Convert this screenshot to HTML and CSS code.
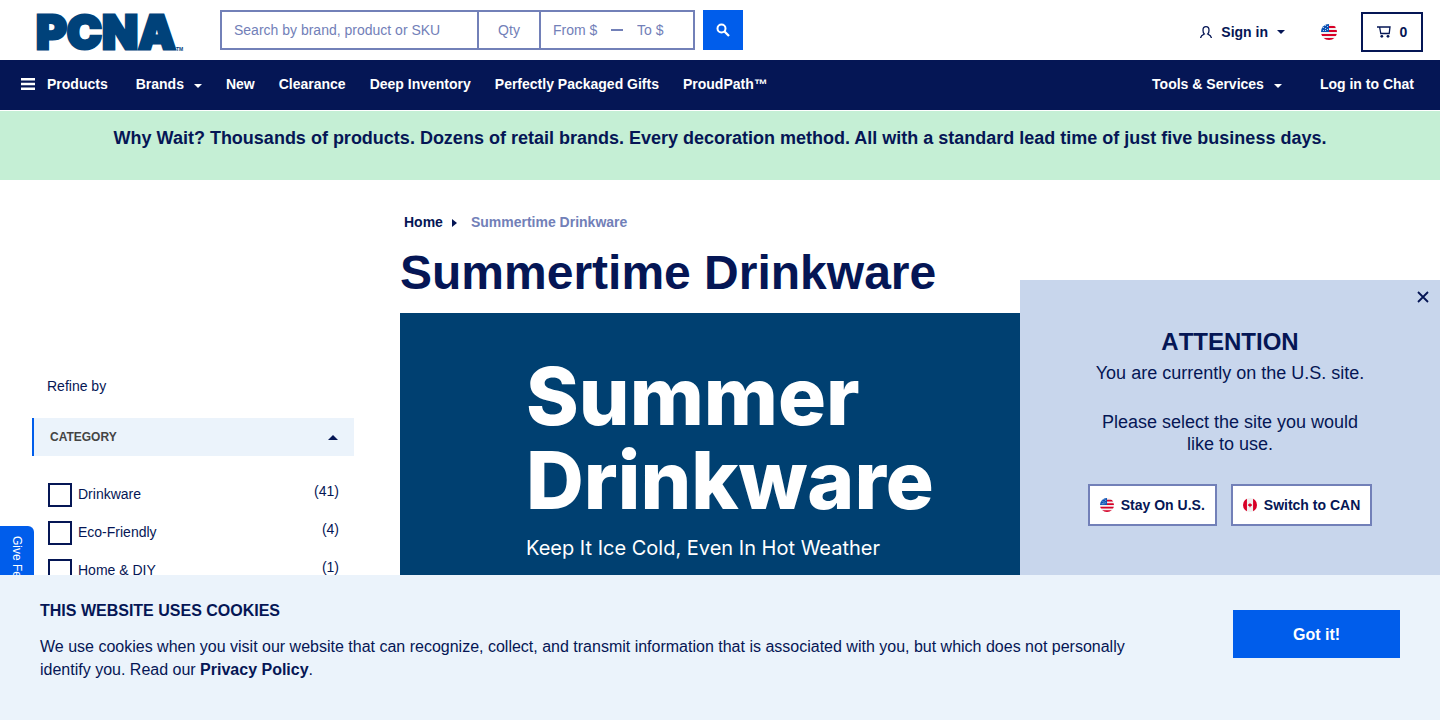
FILE: index.html
```html
<!DOCTYPE html>
<html lang="en">
<head>
<meta charset="utf-8">
<meta name="viewport" content="width=device-width, initial-scale=1">
<title>Summertime Drinkware | PCNA</title>
<link rel="stylesheet" href="styles.css">
</head>
<body>
<svg class="defs" aria-hidden="true">
  <defs>
    <clipPath id="round"><circle cx="8" cy="8" r="8"/></clipPath>
    <symbol id="flag-us" viewBox="0 0 16 16">
      <g clip-path="url(#round)">
        <rect width="16" height="16" fill="#f0f0f0"/>
        <path d="M8 2h8v2H8zM8 6h8v2H8zM0 10h16v2H0zM0 14h16v2H0z" fill="#d80027"/>
        <path d="M0 0h8v8H0z" fill="#0b52b4"/>
        <path d="M2 3h1v1H2zM4 1h1v1H4zM6 2h1v1H6zM4 4h1v1H4zM6 5h1v1H6zM2 6h1v1H2zM4 6h1v1H4z" fill="#b9cdea"/>
      </g>
    </symbol>
    <symbol id="flag-ca" viewBox="0 0 16 16">
      <g clip-path="url(#round)">
        <rect width="16" height="16" fill="#f0f0f0"/>
        <path d="M0 0h4.500v16H0zM11.500 0H16v16h-4.500z" fill="#d80027"/>
        <path d="M8 5.500L9 7L10.200 7L10.200 8.500L9 9.500H8.500V10.500H7.500V9.500H7L5.800 8.500L5.800 7L7 7Z" fill="#d80027"/>
      </g>
    </symbol>
  </defs>
</svg>

<header class="topbar">
  <a class="logo" href="#" aria-label="PCNA home">
    <svg width="148" height="60" viewBox="0 0 148 60" aria-hidden="true">
      <text class="logo-word" x="0" y="49">PCNA</text>
      <text class="logo-tm" x="140" y="51">TM</text>
    </svg>
  </a>
  <form class="search">
    <div class="search-fields">
      <input class="field field-term" type="text" aria-label="Search" placeholder="Search by brand, product or SKU">
      <input class="field field-qty" type="text" aria-label="Quantity" placeholder="Qty">
      <div class="price">
        <input class="field field-from" type="text" aria-label="Price from" placeholder="From $">
        <span class="dash"></span>
        <input class="field field-to" type="text" aria-label="Price to" placeholder="To $">
      </div>
    </div>
    <button class="search-btn" type="button" aria-label="Search">
      <svg width="14" height="14" viewBox="0 0 14 14"><circle cx="5.500" cy="5.500" r="4" fill="none" stroke="#fff" stroke-width="2"/><path d="M8.500 8.500l4.500 4.500" stroke="#fff" stroke-width="2.300"/></svg>
    </button>
  </form>
  <div class="account">
    <button class="signin" type="button">
      <svg width="12" height="12" viewBox="0 0 12 12" fill="none" stroke="#051655" stroke-width="1.300"><path d="M.6 12c0-1.600 1.400-2.900 3.700-4C3.300 7 3 5.700 3 4.200 3 2.200 4 .7 6 .7s3 1.500 3 3.500C9 5.700 8.700 7 7.700 8c2.300 1.100 3.700 2.400 3.700 4"/></svg>
      <span>Sign in</span><span class="caret"></span>
    </button>
    <button class="country" type="button" aria-label="United States"><svg width="16" height="16"><use href="#flag-us"/></svg></button>
    <button class="cart" type="button" aria-label="Cart, 0 items">
      <svg width="14" height="12" viewBox="0 0 14 12"><path d="M0 1h13l-.8 6.500H3.800L2.600 1" fill="none" stroke="#051655" stroke-width="1.300"/><circle cx="4.800" cy="10.300" r="1.400" fill="#051655"/><circle cx="11" cy="10.300" r="1.400" fill="#051655"/></svg>
      <span>0</span>
    </button>
  </div>
</header>

<nav class="nav">
  <a class="products" href="#"><svg width="14" height="12" viewBox="0 0 14 12"><path d="M0 1.200h14M0 6h14M0 10.800h14" stroke="#fff" stroke-width="2.400"/></svg>Products</a>
  <a class="brands" href="#">Brands<span class="caret caret-low"></span></a>
  <a href="#">New</a>
  <a href="#">Clearance</a>
  <a href="#">Deep Inventory</a>
  <a href="#">Perfectly Packaged Gifts</a>
  <a href="#">ProudPath™</a>
  <a class="tools" href="#">Tools &amp; Services<span class="caret caret-low"></span></a>
  <a class="chat" href="#">Log in to Chat</a>
</nav>

<p class="promo">Why Wait? Thousands of products. Dozens of retail brands. Every decoration method. All with a standard lead time of just five business days.</p>

<div class="page">
  <aside class="filters">
    <p class="refine">Refine by</p>
    <button class="group" type="button">CATEGORY<span class="caret-up"></span></button>
    <ul class="options">
      <li><label><input type="checkbox"><span>Drinkware</span></label><span class="count">(41)</span></li>
      <li><label><input type="checkbox"><span>Eco-Friendly</span></label><span class="count">(4)</span></li>
      <li><label><input type="checkbox"><span>Home &amp; DIY</span></label><span class="count">(1)</span></li>
    </ul>
  </aside>
  <main class="content">
    <div class="crumbs"><a href="#">Home</a><span class="caret-right"></span><span>Summertime Drinkware</span></div>
    <h1 class="title">Summertime Drinkware</h1>
    <section class="hero">
      <h2>Summer<br>Drinkware</h2>
      <p>Keep It Ice Cold, Even In Hot Weather</p>
    </section>
  </main>
</div>

<button class="feedback" type="button">Give Feedback</button>

<section class="notice">
  <button class="close" type="button" aria-label="Close"><svg width="12" height="12" viewBox="0 0 12 12"><path d="M1 1l10 10M11 1L1 11" stroke="#051655" stroke-width="1.800"/></svg></button>
  <h2>ATTENTION</h2>
  <p>You are currently on the U.S. site.</p>
  <p class="choose">Please select the site you would like to use.</p>
  <div class="sites">
    <button type="button"><svg width="14" height="14"><use href="#flag-us"/></svg>Stay On U.S.</button>
    <button type="button"><svg width="14" height="14"><use href="#flag-ca"/></svg>Switch to CAN</button>
  </div>
</section>

<section class="cookies">
  <div class="cookie-text">
    <h2>THIS WEBSITE USES COOKIES</h2>
    <p>We use cookies when you visit our website that can recognize, collect, and transmit information that is associated with you, but which does not personally identify you. Read our <a href="#">Privacy Policy</a>.</p>
  </div>
  <button type="button">Got it!</button>
</section>
</body>
</html>
```

FILE: styles.css
```css
* { box-sizing: border-box; }
body { margin: 0; color: #051655; background: #fff; font: 14px/20px "Liberation Sans", Arial, sans-serif; }
h1, h2, p, ul { margin: 0; padding: 0; }
a { color: inherit; text-decoration: none; }
button { margin: 0; padding: 0; border: 0; background: none; color: inherit; font: inherit; cursor: pointer; }
input { font: inherit; color: inherit; }
svg { display: block; flex: none; }
.defs { position: absolute; width: 0; height: 0; }

.caret { border: 4px solid transparent; border-top-color: currentColor; border-bottom: 0; }
.caret-up { border: 5px solid transparent; border-bottom-color: #051655; border-top: 0; }
.caret-right { border: 4px solid transparent; border-left: 5px solid #051655; border-right: 0; }

.topbar { display: flex; align-items: center; height: 60px; padding: 0 17px 0 36px; }
.logo { margin-right: 36px; }
.logo svg { overflow: visible; }
.logo-word { font: 900 47px Inter, sans-serif; fill: #00427a; stroke: #00427a; stroke-width: 3px; }
.logo-tm { font: bold 5px "Liberation Sans", sans-serif; fill: #00427a; }
.search { display: flex; gap: 8px; }
.search-fields { display: flex; width: 475px; height: 40px; border: 2px solid #7280b8; }
.field { min-width: 0; padding: 0 12px; border: 0; outline: 0; background: none; }
.field::placeholder { color: #7280b8; opacity: 1; }
.field-term { flex: 1; }
.field-qty { width: 64px; border: solid #7280b8; border-width: 0 2px; text-align: center; }
.price { display: flex; align-items: center; width: 152px; }
.field-from { width: 70px; }
.field-to { flex: 1; height: 100%; padding-left: 14px; }
.dash { width: 12px; height: 2px; background: #7280b8; }
.search-btn { display: flex; align-items: center; justify-content: center; width: 40px; background: #005deb; }
.account { display: flex; align-items: center; margin: 4px 0 0 auto; font-weight: bold; }
.signin { display: flex; align-items: center; gap: 9px; }
.country { margin: 0 24px 0 36px; }
.cart { display: flex; align-items: center; justify-content: center; gap: 9px; width: 62px; height: 40px; border: 2px solid #051655; }

.nav { display: flex; align-items: center; gap: 24px; height: 50px; padding: 0 26px 2px 21px; background: #051655; color: #fff; font-weight: bold; }
.nav a { display: flex; align-items: center; white-space: nowrap; }
.products { gap: 12px; margin-right: 4px; }
.caret-low { margin: 4px 0 0 10px; }
.tools { margin-left: auto; }
.chat { margin-left: 14px; }
.promo { margin-top: 1px; padding: 17px 16px 32px; background: #c5efd5; font-size: 18px; font-weight: bold; text-align: center; }

.page { display: flex; gap: 46px; padding: 32px 32px 0; }
.filters { flex: none; width: 322px; padding-top: 164px; }
.refine { padding-left: 15px; }
.group { display: flex; align-items: center; justify-content: space-between; width: 100%; height: 38px; margin-top: 22px; padding: 0 16px; border-left: 2px solid #005deb; background: #ebf3fb; color: #444; font-size: 12px; font-weight: bold; }
.options { display: grid; gap: 14px; padding: 27px 15px 0 16px; list-style: none; }
.options li { display: flex; justify-content: space-between; height: 24px; }
.options label { display: flex; gap: 6px; }
.options input { appearance: none; width: 24px; height: 24px; margin: 0; border: 2px solid #051655; }
.options label span { margin-top: 1px; }
.count { margin-top: -2px; }

.content { flex: 1; min-width: 0; }
.crumbs { display: flex; align-items: center; padding-left: 4px; font-weight: bold; color: #7280b8; }
.crumbs a { color: #051655; }
.crumbs .caret-right { margin: 2px 14px 0 9px; }
.title { margin-top: 13px; font-size: 48px; line-height: 56px; }
.hero { height: 320px; margin-top: 12px; padding: 41px 126px; background: #004071; color: #fff; font-family: Inter, sans-serif; }
.hero h2 { font-size: 80px; font-weight: 800; line-height: 84px; }
.hero p { margin-top: 14px; font-size: 20px; font-weight: 400; line-height: 24px; }

.feedback { position: fixed; left: 0; top: 526px; width: 34px; padding: 10px; border-radius: 0 6px 0 0; background: #005deb; color: #fff; font-size: 12px; line-height: 14px; writing-mode: vertical-rl; }
.notice { position: fixed; right: 0; top: 280px; bottom: 0; width: 420px; padding: 48px 68px 0; background: #c8d6ec; font-size: 18px; line-height: 22px; text-align: center; }
.notice h2 { font-size: 24px; line-height: 28px; font-kerning: none; }
.notice p { margin-top: 6px; }
.notice .choose { margin-top: 27px; }
.close { position: absolute; top: 11px; right: 11px; }
.sites { display: flex; justify-content: center; gap: 14px; margin-top: 29px; }
.sites button { display: flex; align-items: center; gap: 7px; height: 42px; padding: 0 10px; border: 2px solid #7280b8; background: #fff; font-size: 14px; font-weight: bold; white-space: nowrap; }
.cookies { position: fixed; left: 0; right: 0; bottom: 0; display: flex; align-items: flex-start; justify-content: space-between; gap: 60px; padding: 24px 40px 39px; background: #ebf3fb; font-size: 16px; line-height: 23px; }
.cookies h2 { font-size: 16px; line-height: 23px; }
.cookies p { margin-top: 13px; }
.cookies a { font-weight: bold; }
.cookie-text { max-width: 1100px; }
.cookies button { flex: none; width: 167px; height: 48px; margin-top: 11px; background: #005deb; color: #fff; font-weight: bold; }
```
